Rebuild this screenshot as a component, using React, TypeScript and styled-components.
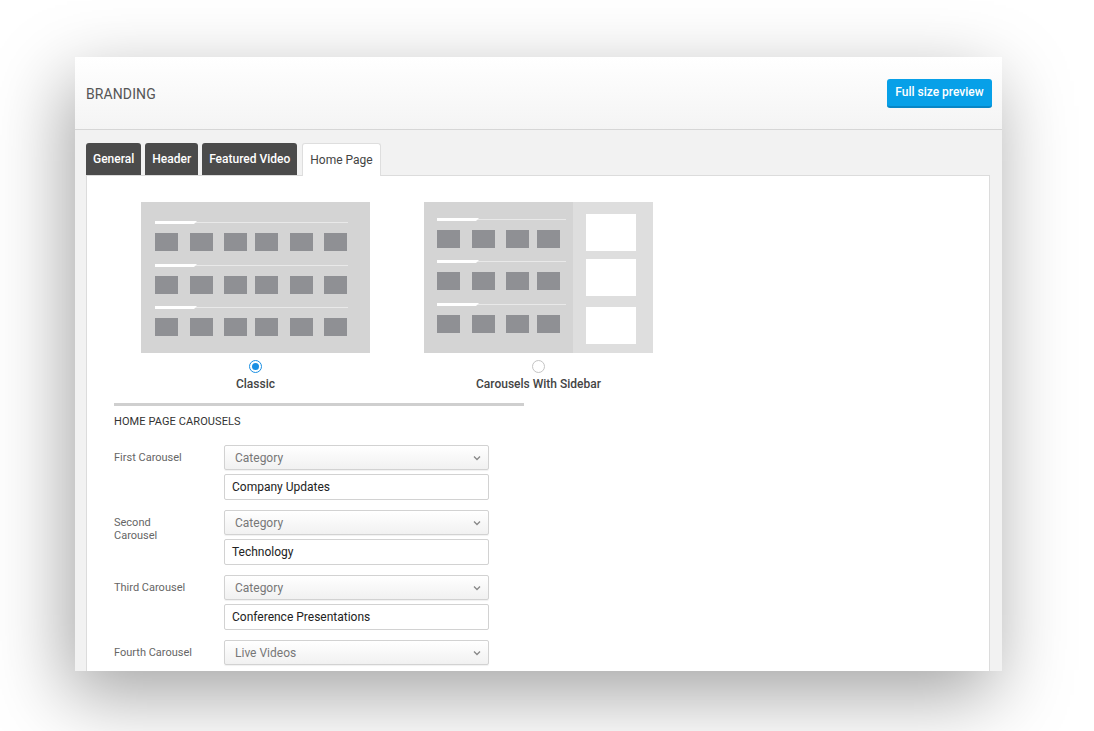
import styled, { createGlobalStyle } from "styled-components";

const GlobalStyle = createGlobalStyle`
  html, body {
    margin: 0;
    padding: 0;
    background: #ffffff;
    font-family: Roboto, "Liberation Sans", Arial, sans-serif;
  }
  * {
    box-sizing: border-box;
  }
`;

const Page = styled.div`
  width: 1094px;
  height: 731px;
  padding: 57px 0 0 75px;
  overflow: hidden;
`;

const Card = styled.div`
  width: 927px;
  height: 614px;
  overflow: hidden;
  background: #f2f2f2;
  box-shadow: -8px 24px 70px rgba(0, 0, 0, 0.36);
  display: flex;
  flex-direction: column;
`;

const CardHeader = styled.div`
  height: 73px;
  flex-shrink: 0;
  display: flex;
  align-items: center;
  justify-content: space-between;
  padding: 0 10px 0 11px;
  background: linear-gradient(#ffffff, #f4f4f4);
  border-bottom: 1px solid #d6d6d6;
`;

const Title = styled.h1`
  margin: 2px 0 0;
  font-size: 14px;
  font-weight: 400;
  color: #555;
  letter-spacing: 0.1px;
`;

const PreviewButton = styled.button`
  height: 29px;
  width: 105px;
  border: none;
  border-bottom: 2px solid #0786c6;
  border-radius: 3px;
  background: #07a0e8;
  color: #fff;
  font-family: inherit;
  font-size: 12px;
  font-weight: 500;
  padding: 0;
`;

const Body = styled.div`
  flex: 1;
  display: flex;
  flex-direction: column;
  padding: 13px 12px 0 11px;
  min-height: 0;
`;

const Tabs = styled.div`
  display: flex;
  gap: 4px;
  height: 32px;
  flex-shrink: 0;
`;

const Tab = styled.div<{ $active?: boolean }>`
  display: flex;
  align-items: center;
  padding: 0 7px;
  margin-left: ${({ $active }) => ($active ? "1px" : "0")};
  height: ${({ $active }) => ($active ? "33px" : "32px")};
  border-radius: 3px 3px 0 0;
  font-size: 12px;
  font-weight: ${({ $active }) => ($active ? 400 : 500)};
  color: ${({ $active }) => ($active ? "#444" : "#fff")};
  background: ${({ $active }) => ($active ? "#fff" : "#4b4b4b")};
  border: ${({ $active }) => ($active ? "1px solid #dedede" : "none")};
  border-bottom: none;
  position: relative;
  z-index: 1;
`;

const Panel = styled.div`
  flex: 1;
  background: #fff;
  border: 1px solid #dcdcdc;
  border-bottom: none;
  padding: 26px 28px 0 27px;
`;

const Layouts = styled.div`
  display: flex;
  gap: 54px;
  padding-left: 27px;
`;

const LayoutOption = styled.div`
  display: flex;
  flex-direction: column;
  align-items: center;
`;

const Radio = styled.span<{ $checked?: boolean }>`
  margin-top: 7px;
  width: 13px;
  height: 13px;
  border-radius: 50%;
  border: 1px solid ${({ $checked }) => ($checked ? "#1a8fe3" : "#c4c4c4")};
  display: flex;
  align-items: center;
  justify-content: center;
  background: #fff;

  &::after {
    content: "";
    width: 7px;
    height: 7px;
    border-radius: 50%;
    background: ${({ $checked }) => ($checked ? "#1a8fe3" : "transparent")};
  }
`;

const OptionLabel = styled.div`
  margin-top: 4px;
  font-size: 12px;
  font-weight: 500;
  color: #444;
`;

const Divider = styled.div`
  width: 410px;
  height: 3px;
  background: #cfcfcf;
  margin-top: 12px;
`;

const SectionTitle = styled.div`
  margin-top: 9px;
  font-size: 11px;
  color: #333;
  letter-spacing: 0.1px;
`;

const Form = styled.div`
  margin-top: 17px;
  display: flex;
  flex-direction: column;
  gap: 10px;
`;

const FieldRow = styled.div`
  display: flex;
`;

const FieldLabel = styled.div`
  width: 110px;
  flex-shrink: 0;
  padding-top: 6px;
  font-size: 11px;
  line-height: 13px;
  color: #666;
  white-space: pre-line;
`;

const FieldControls = styled.div`
  display: flex;
  flex-direction: column;
  gap: 4px;
  width: 265px;
`;

const Select = styled.div`
  height: 25px;
  display: flex;
  align-items: center;
  justify-content: space-between;
  padding: 0 7px 0 10px;
  border: 1px solid #d2d2d2;
  border-radius: 2px;
  background: linear-gradient(#ffffff, #f1f1f1);
  box-shadow: 0 1px 1px rgba(0, 0, 0, 0.06);
  font-size: 12px;
  color: #777;
`;

const TextField = styled.div`
  height: 26px;
  display: flex;
  align-items: center;
  padding: 0 7px;
  border: 1px solid #d2d2d2;
  border-radius: 2px;
  background: #fff;
  font-size: 12px;
  color: #222;
`;

const Chevron = () => (
  <svg width="8" height="6" viewBox="0 0 8 6">
    <path d="M1 1.5 L4 4.5 L7 1.5" fill="none" stroke="#888" strokeWidth="1.3" />
  </svg>
);

const Row = ({ y, xs, lineEnd }: { y: number; xs: number[]; lineEnd: number }) => (
  <g>
    <rect x={xs[0]} y={y} width={lineEnd - xs[0]} height={1} fill="#e9e9e9" />
    <path d={`M${xs[0]} ${y - 1} H${xs[0] + 42} L${xs[0] + 39} ${y + 2} H${xs[0]} Z`} fill="#fff" />
    {xs.map((x) => (
      <rect key={x} x={x} y={y + 11} width={23} height={18} fill="#8f9094" />
    ))}
  </g>
);

const ClassicThumb = () => (
  <svg width="229" height="151" viewBox="0 0 229 151">
    <rect width="229" height="151" fill="#d4d4d4" />
    {[20, 63, 105].map((y) => (
      <Row key={y} y={y} xs={[14, 49, 83, 114, 149, 183]} lineEnd={207} />
    ))}
  </svg>
);

const SidebarThumb = () => (
  <svg width="229" height="151" viewBox="0 0 229 151">
    <rect width="229" height="151" fill="#d4d4d4" />
    <rect x="149" width="80" height="151" fill="#dedede" />
    {[17, 59, 102].map((y) => (
      <Row key={y} y={y} xs={[13, 48, 82, 113]} lineEnd={142} />
    ))}
    {[12, 57, 105].map((y) => (
      <rect key={y} x={162} y={y} width={50} height={37} fill="#fff" />
    ))}
  </svg>
);

const carousels = [
  { label: "First Carousel", select: "Category", value: "Company Updates" },
  { label: "Second\nCarousel", select: "Category", value: "Technology" },
  { label: "Third Carousel", select: "Category", value: "Conference Presentations" },
  { label: "Fourth Carousel", select: "Live Videos" },
];

const App = () => {
  return (
    <>
      <GlobalStyle />
      <Page>
        <Card>
          <CardHeader>
            <Title>BRANDING</Title>
            <PreviewButton>Full size preview</PreviewButton>
          </CardHeader>
          <Body>
            <Tabs>
              <Tab>General</Tab>
              <Tab>Header</Tab>
              <Tab>Featured Video</Tab>
              <Tab $active>Home Page</Tab>
            </Tabs>
            <Panel>
              <Layouts>
                <LayoutOption>
                  <ClassicThumb />
                  <Radio $checked />
                  <OptionLabel>Classic</OptionLabel>
                </LayoutOption>
                <LayoutOption>
                  <SidebarThumb />
                  <Radio />
                  <OptionLabel>Carousels With Sidebar</OptionLabel>
                </LayoutOption>
              </Layouts>
              <Divider />
              <SectionTitle>HOME PAGE CAROUSELS</SectionTitle>
              <Form>
                {carousels.map((c) => (
                  <FieldRow key={c.label}>
                    <FieldLabel>{c.label}</FieldLabel>
                    <FieldControls>
                      <Select>
                        {c.select}
                        <Chevron />
                      </Select>
                      {c.value && <TextField>{c.value}</TextField>}
                    </FieldControls>
                  </FieldRow>
                ))}
              </Form>
            </Panel>
          </Body>
        </Card>
      </Page>
    </>
  );
};

export default App;
